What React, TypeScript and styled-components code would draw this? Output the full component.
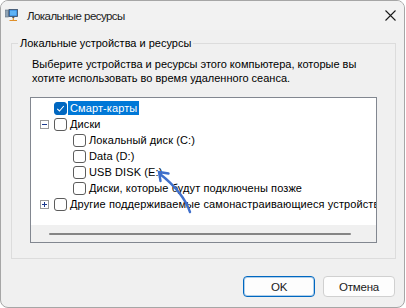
import React from 'react'
import styled, { createGlobalStyle } from 'styled-components'

const GlobalStyle = createGlobalStyle`
body {
  margin: 0;
  background: #ffffff;
  font-family: "Liberation Sans", Arial, sans-serif;
}
`

const Window = styled.div`
width: 405px;
height: 308px;
box-sizing: border-box;
border: 1px solid #a6a6a6;
border-radius: 8px;
background: #f0f0f0;
display: flex;
flex-direction: column;
overflow: hidden;
`

const TitleBar = styled.div`
height: 29px;
flex-shrink: 0;
display: flex;
align-items: center;
padding-left: 4px;
background: #f2f2f2;
`

const TitleText = styled.div`
flex: 1;
margin-left: 9px;
font-size: 11.5px;
letter-spacing: -0.55px;
color: #1a1a1a;
`

const CloseBtn = styled.div`
width: 11px;
height: 11px;
margin-right: 8px;
display: flex;
`

const Body = styled.div`
flex: 1;
display: flex;
flex-direction: column;
padding: 5px 0 0 10px;
`

const Group = styled.fieldset`
width: 385px;
box-sizing: border-box;
margin: 0;
padding: 6px 18px 15px 18px;
border: 1px solid #dcdcdc;
min-width: 0;
`

const Legend = styled.legend`
font-size: 11px;
line-height: 16px;
padding: 0 2px;
margin-left: -12px;
color: #000;
`

const Description = styled.p`
margin: 0;
padding-left: 2px;
font-size: 11px;
line-height: 14px;
color: #000;
white-space: nowrap;
`

const TreeBox = styled.div`
position: relative;
margin-top: 12px;
width: 347px;
height: 146px;
box-sizing: border-box;
border: 1px solid #828790;
background: #fff;
display: flex;
flex-direction: column;
`

const TreeRows = styled.div`
flex: 1;
padding-top: 2px;
overflow: hidden;
`

const Row = styled.div<{ $level: number }>`
height: 16px;
display: flex;
align-items: center;
padding-left: ${p => 9 + p.$level * 19}px;
white-space: nowrap;
`

const Expander = styled.div<{ $empty?: boolean }>`
width: 9px;
height: 9px;
box-sizing: border-box;
margin-right: 5px;
flex-shrink: 0;
border: ${p => (p.$empty ? 'none' : '1px solid #9a9a9a')};
display: flex;
align-items: center;
justify-content: center;
`

const Check = styled.div<{ $checked?: boolean }>`
width: 13px;
height: 13px;
box-sizing: border-box;
flex-shrink: 0;
border-radius: 3px;
border: 1px solid ${p => (p.$checked ? '#0067c0' : '#5c5c5c')};
background: ${p => (p.$checked ? '#0067c0' : '#fff')};
display: flex;
align-items: center;
justify-content: center;
`

const Label = styled.span<{ $selected?: boolean }>`
padding: 0 2px;
margin-left: 1px;
line-height: 14px;
font-size: 11px;
letter-spacing: 0.1px;
color: ${p => (p.$selected ? '#fff' : '#000')};
background: ${p => (p.$selected ? '#0078d7' : 'transparent')};
`

const ScrollBar = styled.div`
height: 17px;
flex-shrink: 0;
background: #f0f0f0;
display: flex;
align-items: center;
padding-left: 18px;
`

const Thumb = styled.div`
width: 302px;
height: 2px;
border-radius: 1px;
background: #858585;
`

const Arrow = styled.svg`
position: absolute;
left: 0;
top: 0;
overflow: visible;
pointer-events: none;
`

const Footer = styled.div`
display: flex;
justify-content: flex-end;
gap: 8px;
margin-top: 17px;
padding-right: 9px;
`

const Button = styled.button<{ $primary?: boolean }>`
width: 72px;
height: 21px;
box-sizing: border-box;
border-radius: 4px;
font-family: "Liberation Sans", Arial, sans-serif;
font-size: 11.5px;
letter-spacing: -0.2px;
color: #1a1a1a;
background: #fdfdfd;
border: 1px solid ${p => (p.$primary ? '#0067c0' : '#d0d0d0')};
box-shadow: ${p => (p.$primary ? 'inset 0 0 0 1px rgba(0,103,192,0.3)' : 'none')};
padding: 0;
`

const AppIcon = () => (
  <svg width="13" height="13" viewBox="0 0 13 13">
    <rect x="0.5" y="1" width="3" height="7" fill="#8fa3b5" stroke="#5d6f80" strokeWidth="0.6" />
    <rect x="4" y="0.5" width="8.5" height="7" fill="#2f7fd6" stroke="#3b4d63" strokeWidth="0.8" />
    <rect x="5" y="1.5" width="6.5" height="5" fill="#5fb3f5" />
    <rect x="7.3" y="7.5" width="2" height="1.5" fill="#4a5666" />
    <path d="M8.3 9 V11.5 M4.5 11.5 H12" stroke="#e0902a" strokeWidth="1.2" />
  </svg>
)

const CloseIcon = () => (
  <svg width="11" height="11" viewBox="0 0 11 11">
    <path d="M0.5 0.5 L10.5 10.5 M10.5 0.5 L0.5 10.5" stroke="#1a1a1a" strokeWidth="1.1" />
  </svg>
)

const Tick = () => (
  <svg width="9" height="9" viewBox="0 0 9 9">
    <path d="M1.2 4.8 L3.5 7 L7.8 2" fill="none" stroke="#fff" strokeWidth="1.1" />
  </svg>
)

const Sign = ({ plus }: { plus?: boolean }) => (
  <svg width="7" height="7" viewBox="0 0 7 7">
    <path d={plus ? 'M1 3.5 H6 M3.5 1 V6' : 'M1 3.5 H6'} stroke="#1c3a8e" strokeWidth="1" />
  </svg>
)

type Item = {
  label: string
  level: number
  expander?: 'plus' | 'minus'
  checked?: boolean
  selected?: boolean
}

const items: Item[] = [
  { label: 'Смарт-карты', level: 0, checked: true, selected: true },
  { label: 'Диски', level: 0, expander: 'minus' },
  { label: 'Локальный диск (C:)', level: 1 },
  { label: 'Data (D:)', level: 1 },
  { label: 'USB DISK (E:)', level: 1 },
  { label: 'Диски, которые будут подключены позже', level: 1 },
  { label: 'Другие поддерживаемые самонастраивающиеся устройства', level: 0, expander: 'plus' },
]

export default function App() {
  return (
    <>
      <GlobalStyle />
      <Window>
        <TitleBar>
          <AppIcon />
          <TitleText>Локальные ресурсы</TitleText>
          <CloseBtn>
            <CloseIcon />
          </CloseBtn>
        </TitleBar>
        <Body>
          <Group>
            <Legend>Локальные устройства и ресурсы</Legend>
            <Description>
              Выберите устройства и ресурсы этого компьютера, которые вы
              <br />
              хотите использовать во время удаленного сеанса.
            </Description>
            <TreeBox>
              <TreeRows>
                {items.map(item => (
                  <Row key={item.label} $level={item.level}>
                    <Expander $empty={!item.expander}>
                      {item.expander && <Sign plus={item.expander === 'plus'} />}
                    </Expander>
                    <Check $checked={item.checked}>{item.checked && <Tick />}</Check>
                    <Label $selected={item.selected}>{item.label}</Label>
                  </Row>
                ))}
              </TreeRows>
              <ScrollBar>
                <Thumb />
              </ScrollBar>
              <Arrow width="347" height="146">
                <path d="M159 114 Q152 94 129 76" fill="none" stroke="#3f6fcb" strokeWidth="2.4" strokeLinecap="round" />
                <path d="M137.5 75.5 L128 74 L129.5 83" fill="none" stroke="#3f6fcb" strokeWidth="2.4" strokeLinecap="round" strokeLinejoin="round" />
              </Arrow>
            </TreeBox>
          </Group>
          <Footer>
            <Button $primary>OK</Button>
            <Button>Отмена</Button>
          </Footer>
        </Body>
      </Window>
    </>
  )
}
